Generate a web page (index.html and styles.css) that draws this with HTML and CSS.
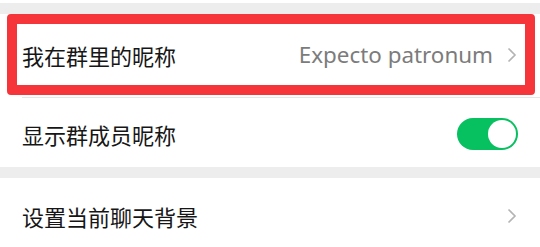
FILE: index.html
```html
<!DOCTYPE html>
<html lang="zh-CN">
<head>
    <meta charset="UTF-8">
    <meta name="viewport" content="width=device-width, initial-scale=1.0">
    <title>聊天信息</title>
    <link rel="stylesheet" href="styles.css">
</head>
<body>

    <div class="top-strip"></div>
    <div class="gap"></div>

    <div class="group">
        <div class="row row-first">
            <span class="label">我在群里的昵称</span>
            <span class="value">Expecto patronum</span>
            <svg class="chevron" viewBox="0 0 10 16" width="10" height="16">
                <polyline points="1.5,1.5 8,8 1.5,14.5" fill="none" stroke="#b4b4b4" stroke-width="1.6"/>
            </svg>
            <div class="highlight"></div>
        </div>
        <div class="divider"></div>
        <div class="row row-second">
            <span class="label">显示群成员昵称</span>
            <div class="switch on">
                <div class="knob"></div>
            </div>
        </div>
    </div>

    <div class="gap"></div>

    <div class="group">
        <div class="row row-third">
            <span class="label">设置当前聊天背景</span>
            <svg class="chevron" viewBox="0 0 10 16" width="10" height="16">
                <polyline points="1.5,1.5 8,8 1.5,14.5" fill="none" stroke="#b4b4b4" stroke-width="1.6"/>
            </svg>
        </div>
    </div>

</body>
</html>
```

FILE: styles.css
```css
* {
    margin: 0;
    padding: 0;
    box-sizing: border-box;
}

body {
    width: 540px;
    height: 247px;
    overflow: hidden;
    background: #ffffff;
    font-family: "Noto Sans", "Noto Sans CJK SC", sans-serif;
    color: #191919;
}

.top-strip {
    height: 3px;
    background: #ffffff;
}

.gap {
    height: 11px;
    background: #ededed;
}

.group {
    background: #ffffff;
}

.row {
    position: relative;
    display: flex;
    align-items: center;
    padding: 0 23px 0 22px;
}

.row-first {
    height: 83px;
    padding-bottom: 2px;
}

.row-second {
    height: 69px;
    padding-top: 2px;
}

.row-third {
    height: 80px;
    padding-bottom: 4px;
}

.label {
    flex: 1;
    font-family: "Noto Sans CJK SC", sans-serif;
    font-size: 22px;
    color: #161616;
}

.value {
    font-family: "Noto Sans", "Noto Sans CJK SC", sans-serif;
    font-size: 22.4px;
    color: #7c7c7c;
    margin-right: 14px;
}

.chevron {
    display: block;
}

.divider {
    height: 1px;
    margin-left: 22px;
    background: #e6e6e6;
}

.switch {
    width: 61px;
    height: 32px;
    border-radius: 16px;
    background: #e5e5e5;
    display: flex;
    align-items: center;
    padding: 2px;
    margin-right: -1px;
}

.switch.on {
    background: #07c160;
    justify-content: flex-end;
}

.knob {
    width: 28px;
    height: 28px;
    border-radius: 50%;
    background: #ffffff;
}

/* annotation box drawn over the first row */
.highlight {
    position: absolute;
    left: 7px;
    top: 0;
    width: 528px;
    height: 81px;
    border: 10px solid #f5353a;
    border-radius: 4px;
}
```
